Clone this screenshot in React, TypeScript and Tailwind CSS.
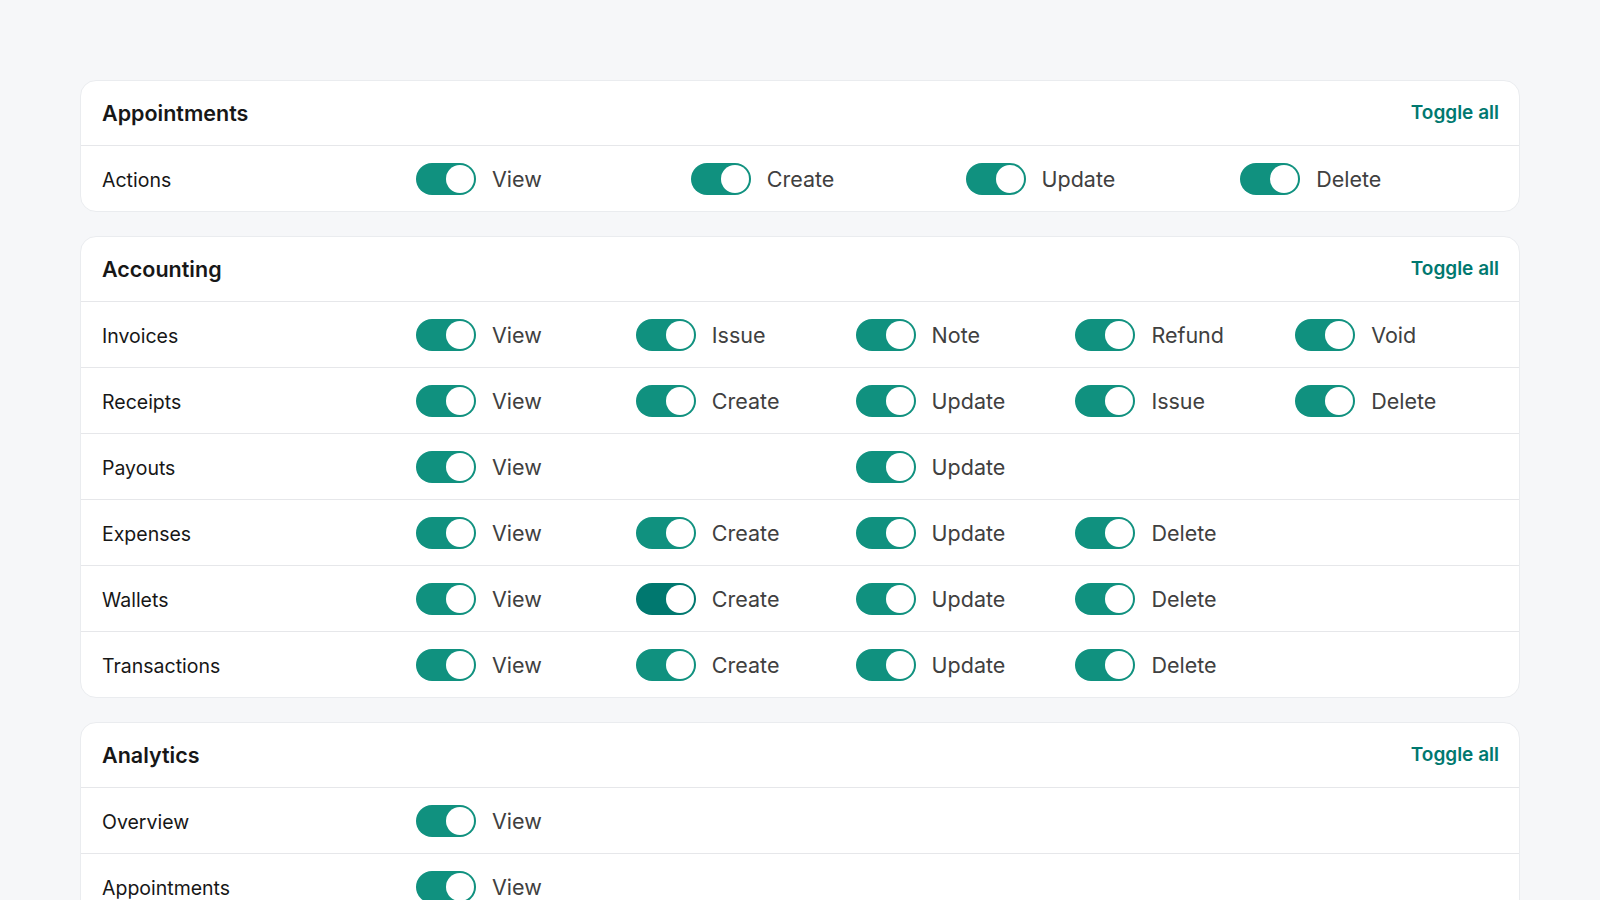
import { useState } from "react";

type Option = { name: string; col: number; active?: boolean };
type Row = { label: string; options: Option[] };
type Section = { title: string; cols: 4 | 5; rows: Row[] };

const colStart = ["", "col-start-1", "col-start-2", "col-start-3", "col-start-4", "col-start-5"];

const opts = (names: string[]): Option[] => names.map((name, i) => ({ name, col: i + 1 }));

const SECTIONS: Section[] = [
  {
    title: "Appointments",
    cols: 4,
    rows: [{ label: "Actions", options: opts(["View", "Create", "Update", "Delete"]) }],
  },
  {
    title: "Accounting",
    cols: 5,
    rows: [
      { label: "Invoices", options: opts(["View", "Issue", "Note", "Refund", "Void"]) },
      { label: "Receipts", options: opts(["View", "Create", "Update", "Issue", "Delete"]) },
      {
        label: "Payouts",
        options: [
          { name: "View", col: 1 },
          { name: "Update", col: 3 },
        ],
      },
      { label: "Expenses", options: opts(["View", "Create", "Update", "Delete"]) },
      {
        label: "Wallets",
        options: [
          { name: "View", col: 1 },
          { name: "Create", col: 2, active: true },
          { name: "Update", col: 3 },
          { name: "Delete", col: 4 },
        ],
      },
      { label: "Transactions", options: opts(["View", "Create", "Update", "Delete"]) },
    ],
  },
  {
    title: "Analytics",
    cols: 5,
    rows: [
      { label: "Overview", options: opts(["View"]) },
      { label: "Appointments", options: opts(["View"]) },
    ],
  },
];

function Switch({ checked, active, onChange }: { checked: boolean; active?: boolean; onChange: () => void }) {
  return (
    <button
      type="button"
      role="switch"
      aria-checked={checked}
      onClick={onChange}
      className={`flex h-8 w-[60px] shrink-0 items-center rounded-full p-0.5 transition-colors ${
        checked ? (active ? "bg-teal-700" : "bg-[#10917f]") : "bg-gray-300"
      }`}
    >
      <span
        className={`h-7 w-7 rounded-full bg-white transition-transform ${
          checked ? "translate-x-[28px]" : "translate-x-0"
        }`}
      />
    </button>
  );
}

function PermissionCard({ section }: { section: Section }) {
  const [state, setState] = useState<Record<string, boolean>>({});
  const key = (r: string, o: string) => `${r}:${o}`;
  const isOn = (r: string, o: string) => state[key(r, o)] ?? true;

  const toggleAll = () => {
    const allOn = section.rows.every((r) => r.options.every((o) => isOn(r.label, o.name)));
    const next: Record<string, boolean> = {};
    section.rows.forEach((r) => r.options.forEach((o) => (next[key(r.label, o.name)] = !allOn)));
    setState(next);
  };

  return (
    <div className="overflow-hidden rounded-2xl border border-[#eaecef] bg-white">
      <div className="flex h-16 items-center justify-between pr-5 pl-[21px]">
        <h2 className="text-[21.5px] font-semibold text-neutral-900">{section.title}</h2>
        <button onClick={toggleAll} className="text-[19px] font-semibold text-teal-700 hover:text-teal-800">
          Toggle all
        </button>
      </div>
      {section.rows.map((row) => (
        <div key={row.label} className="flex h-[66px] items-center gap-4 border-t border-[#e6e7ea] pr-5 pl-[21px]">
          <span className="w-[298px] shrink-0 pt-1 text-[19.5px] text-neutral-900">{row.label}</span>
          <div className={`grid flex-1 gap-4 ${section.cols === 4 ? "grid-cols-4" : "grid-cols-5"}`}>
            {row.options.map((o) => (
              <label key={o.name} className={`flex items-center gap-4 ${colStart[o.col]}`}>
                <Switch
                  checked={isOn(row.label, o.name)}
                  active={o.active}
                  onChange={() =>
                    setState((s) => ({ ...s, [key(row.label, o.name)]: !isOn(row.label, o.name) }))
                  }
                />
                <span className="pt-0.5 text-[21.5px] text-neutral-700">{o.name}</span>
              </label>
            ))}
          </div>
        </div>
      ))}
    </div>
  );
}

export default function App() {
  return (
    <div
      className="h-screen overflow-hidden bg-[#f6f7f9] px-20 pt-20"
      style={{ fontFamily: "Inter, 'Noto Sans', 'Liberation Sans', sans-serif" }}
    >
      <div className="space-y-6">
        {SECTIONS.map((s) => (
          <PermissionCard key={s.title} section={s} />
        ))}
      </div>
    </div>
  );
}
